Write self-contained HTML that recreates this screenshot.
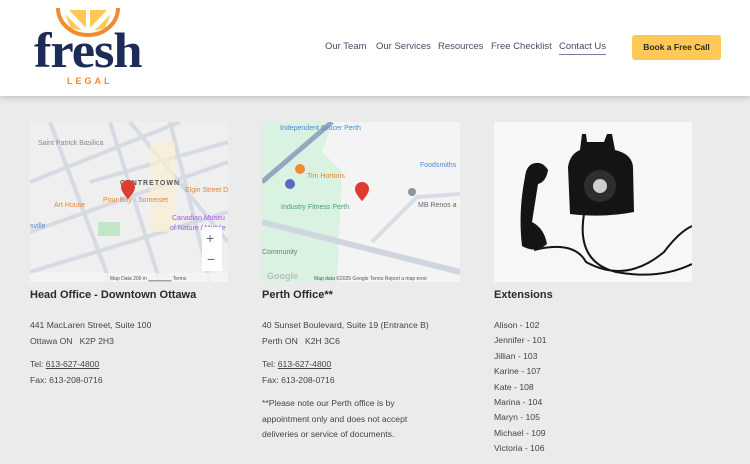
<!DOCTYPE html>
<html><head><meta charset="utf-8"><style>
*{margin:0;padding:0;box-sizing:border-box}
body{width:750px;height:464px;overflow:hidden;background:#ebebeb;font-family:"Liberation Sans",sans-serif;position:relative;color:#333}
.hdr{position:absolute;left:0;top:0;width:750px;height:96px;background:#fff;box-shadow:0 2px 6px rgba(0,0,0,.18)}
.nav{position:absolute;top:41px;font-size:9.5px;color:#4a4a6a;white-space:nowrap}
.btn{position:absolute;left:632px;top:35px;width:89px;height:25px;background:#ffc857;border-radius:3px;font-size:8.5px;font-weight:bold;color:#2a2a2a;text-align:center;line-height:25px}
.map{position:absolute;top:122px;width:198px;height:160px;background:#f1f1f1;overflow:hidden}
.h{position:absolute;top:289px;font-size:11px;font-weight:bold;color:#2a2a2a}
.t{position:absolute;font-size:8.6px;color:#444;line-height:15.5px}
.u{text-decoration:underline}
</style></head><body>
<div class="hdr">
<svg style="position:absolute;left:56px;top:0" width="64" height="38" viewBox="0 0 64 38">
<path d="M2 8 A30 27 0 0 0 62 8" fill="none" stroke="#f28a2e" stroke-width="4"/>
<path d="M13 10 L30 10 L30 28 Z" fill="#ffc857"/><path d="M34 10 L51 10 L34 28 Z" fill="#ffc857"/>
<path d="M9 14 L26 31 L15 28 Z" fill="#ffc857"/><path d="M55 14 L38 31 L49 28 Z" fill="#ffc857"/>
</svg>
<div style="position:absolute;left:34px;top:25px;font-family:'Liberation Serif',serif;font-weight:bold;font-size:50px;color:#1d2b57;letter-spacing:-1px;line-height:50px;transform:scaleX(1.05);transform-origin:left">fresh</div>
<div style="position:absolute;left:67px;top:76px;font-size:9px;font-weight:bold;color:#f28a2e;letter-spacing:3px">LEGAL</div>
<div class="nav" style="left:325px">Our Team</div>
<div class="nav" style="left:376px">Our Services</div>
<div class="nav" style="left:438px">Resources</div>
<div class="nav" style="left:491px">Free Checklist</div>
<div class="nav" style="left:559px;border-bottom:1px solid #7a7aa0;padding-bottom:2px">Contact Us</div>
<div class="btn">Book a Free Call</div>
</div>

<div class="map" style="left:30px">
<svg width="198" height="160">
<rect width="198" height="160" fill="#efefef"/>
<path d="M80 0 L130 160 M60 60 L198 20 M0 110 L198 40 M100 0 L198 120 M20 0 L80 160 M0 60 L150 0 M0 150 L198 90 M140 0 L180 160" stroke="#d6dbe3" stroke-width="4" fill="none"/>
<rect x="120" y="20" width="25" height="90" fill="#fbf0d4" opacity=".7"/>
<rect x="68" y="100" width="22" height="14" fill="#bfe6c7"/>
<text x="8" y="23" font-size="7" fill="#888">Saint Patrick Basilica</text>
<text x="90" y="63" font-size="7" font-weight="bold" fill="#555" letter-spacing="1">CENTRETOWN</text>
<text x="155" y="70" font-size="7" fill="#e8842c">Elgin Street D</text>
<text x="24" y="85" font-size="7" fill="#e8842c">Art House</text>
<text x="73" y="80" font-size="7" fill="#e8842c">Pour Boy · Somerset</text>
<text x="142" y="98" font-size="7" fill="#9b5de5">Canadian Museu</text>
<text x="140" y="108" font-size="7" fill="#9b5de5">of Nature / Musée</text>
<text x="0" y="106" font-size="7" fill="#4b8bd6">sville</text>
<path d="M98 58 a7 7 0 0 1 7 7 c0 5 -7 12 -7 12 c0 0 -7 -7 -7 -12 a7 7 0 0 1 7 -7z" fill="#e03b2f"/>
<rect x="172" y="105" width="20" height="44" fill="#fff"/>
<text x="176" y="121" font-size="14" fill="#666">+</text><text x="177" y="142" font-size="14" fill="#666">−</text>
<rect x="0" y="151" width="198" height="9" fill="#f5f5f5" opacity=".8"/>
<text x="80" y="158" font-size="5" fill="#555">Map Data   200 m ▁▁▁▁▁▁   Terms</text>
</svg></div>

<div class="map" style="left:262px">
<svg width="198" height="160">
<rect width="198" height="160" fill="#f4f4f4"/>
<path d="M0 0 L70 0 L60 30 L80 50 L75 160 L0 160Z" fill="#d9f2e2"/>
<path d="M0 60 L70 0" stroke="#94a7bf" stroke-width="5"/>
<path d="M0 100 L198 150" stroke="#d0d6df" stroke-width="6"/>
<path d="M110 120 L155 75 L198 72" stroke="#d8dde5" stroke-width="4" fill="none"/>
<text x="18" y="8" font-size="7" fill="#4b8bd6">Independent Grocer Perth</text>
<text x="45" y="56" font-size="7" fill="#e8842c">Tim Hortons</text>
<text x="158" y="45" font-size="7" fill="#4b8bd6">Foodsmiths</text>
<text x="19" y="87" font-size="7" fill="#4a9b78">Industry Fitness Perth</text>
<text x="156" y="85" font-size="7" fill="#666">MB Renos a</text>
<text x="0" y="132" font-size="7" fill="#777">Community</text>
<path d="M100 60 a7 7 0 0 1 7 7 c0 5 -7 12 -7 12 c0 0 -7 -7 -7 -12 a7 7 0 0 1 7 -7z" fill="#e03b2f"/>
<circle cx="150" cy="70" r="4" fill="#8a96a3"/><circle cx="28" cy="62" r="5" fill="#5c6bc0"/><circle cx="38" cy="47" r="5" fill="#f28a2e"/>
<text x="5" y="157" font-size="9" fill="#bbb" font-weight="bold">Google</text>
<text x="52" y="158" font-size="5" fill="#555">Map data ©2025 Google   Terms   Report a map error</text>
</svg></div>

<div class="map" style="left:494px;background:#fafafa">
<svg width="198" height="160">
<rect width="198" height="160" fill="#f7f7f7"/>
<path d="M88 12 L92 12 L93 20 L110 20 L113 12 L118 12 L121 28 Q138 32 139 45 L140 90 Q110 96 76 92 L74 45 Q76 32 86 28Z" fill="#141414"/>
<circle cx="106" cy="64" r="16" fill="#2e2e2e"/><circle cx="106" cy="64" r="7" fill="#cfcfcf"/>
<path d="M38 42 Q48 38 54 48 Q52 60 44 62 L38 100 Q50 106 53 122 Q42 132 28 124 Q24 90 31 55 Q32 45 38 42Z" fill="#141414"/>
<path d="M90 92 Q82 140 122 150 Q165 158 198 142 M40 128 Q80 118 92 140 Q132 162 170 130 Q185 110 198 104" stroke="#141414" stroke-width="2" fill="none"/>
</svg></div>

<div class="h" style="left:30px">Head Office - Downtown Ottawa</div>
<div class="h" style="left:262px">Perth Office**</div>
<div class="h" style="left:494px">Extensions</div>

<div class="t" style="left:30px;top:318px">441 MacLaren Street, Suite 100<br>Ottawa ON &nbsp; K2P 2H3</div>
<div class="t" style="left:30px;top:357px">Tel: <span class="u">613-627-4800</span><br>Fax: 613-208-0716</div>
<div class="t" style="left:262px;top:318px">40 Sunset Boulevard, Suite 19 (Entrance B)<br>Perth ON &nbsp; K2H 3C6</div>
<div class="t" style="left:262px;top:357px">Tel: <span class="u">613-627-4800</span><br>Fax: 613-208-0716</div>
<div class="t" style="left:262px;top:396px">**Please note our Perth office is by<br>appointment only and does not accept<br>deliveries or service of documents.</div>
<div class="t" style="left:494px;top:318px;line-height:15.4px">Alison - 102<br>Jennifer - 101<br>Jillian - 103<br>Karine - 107<br>Kate - 108<br>Marina - 104<br>Maryn - 105<br>Michael - 109<br>Victoria - 106</div>
</body></html>
